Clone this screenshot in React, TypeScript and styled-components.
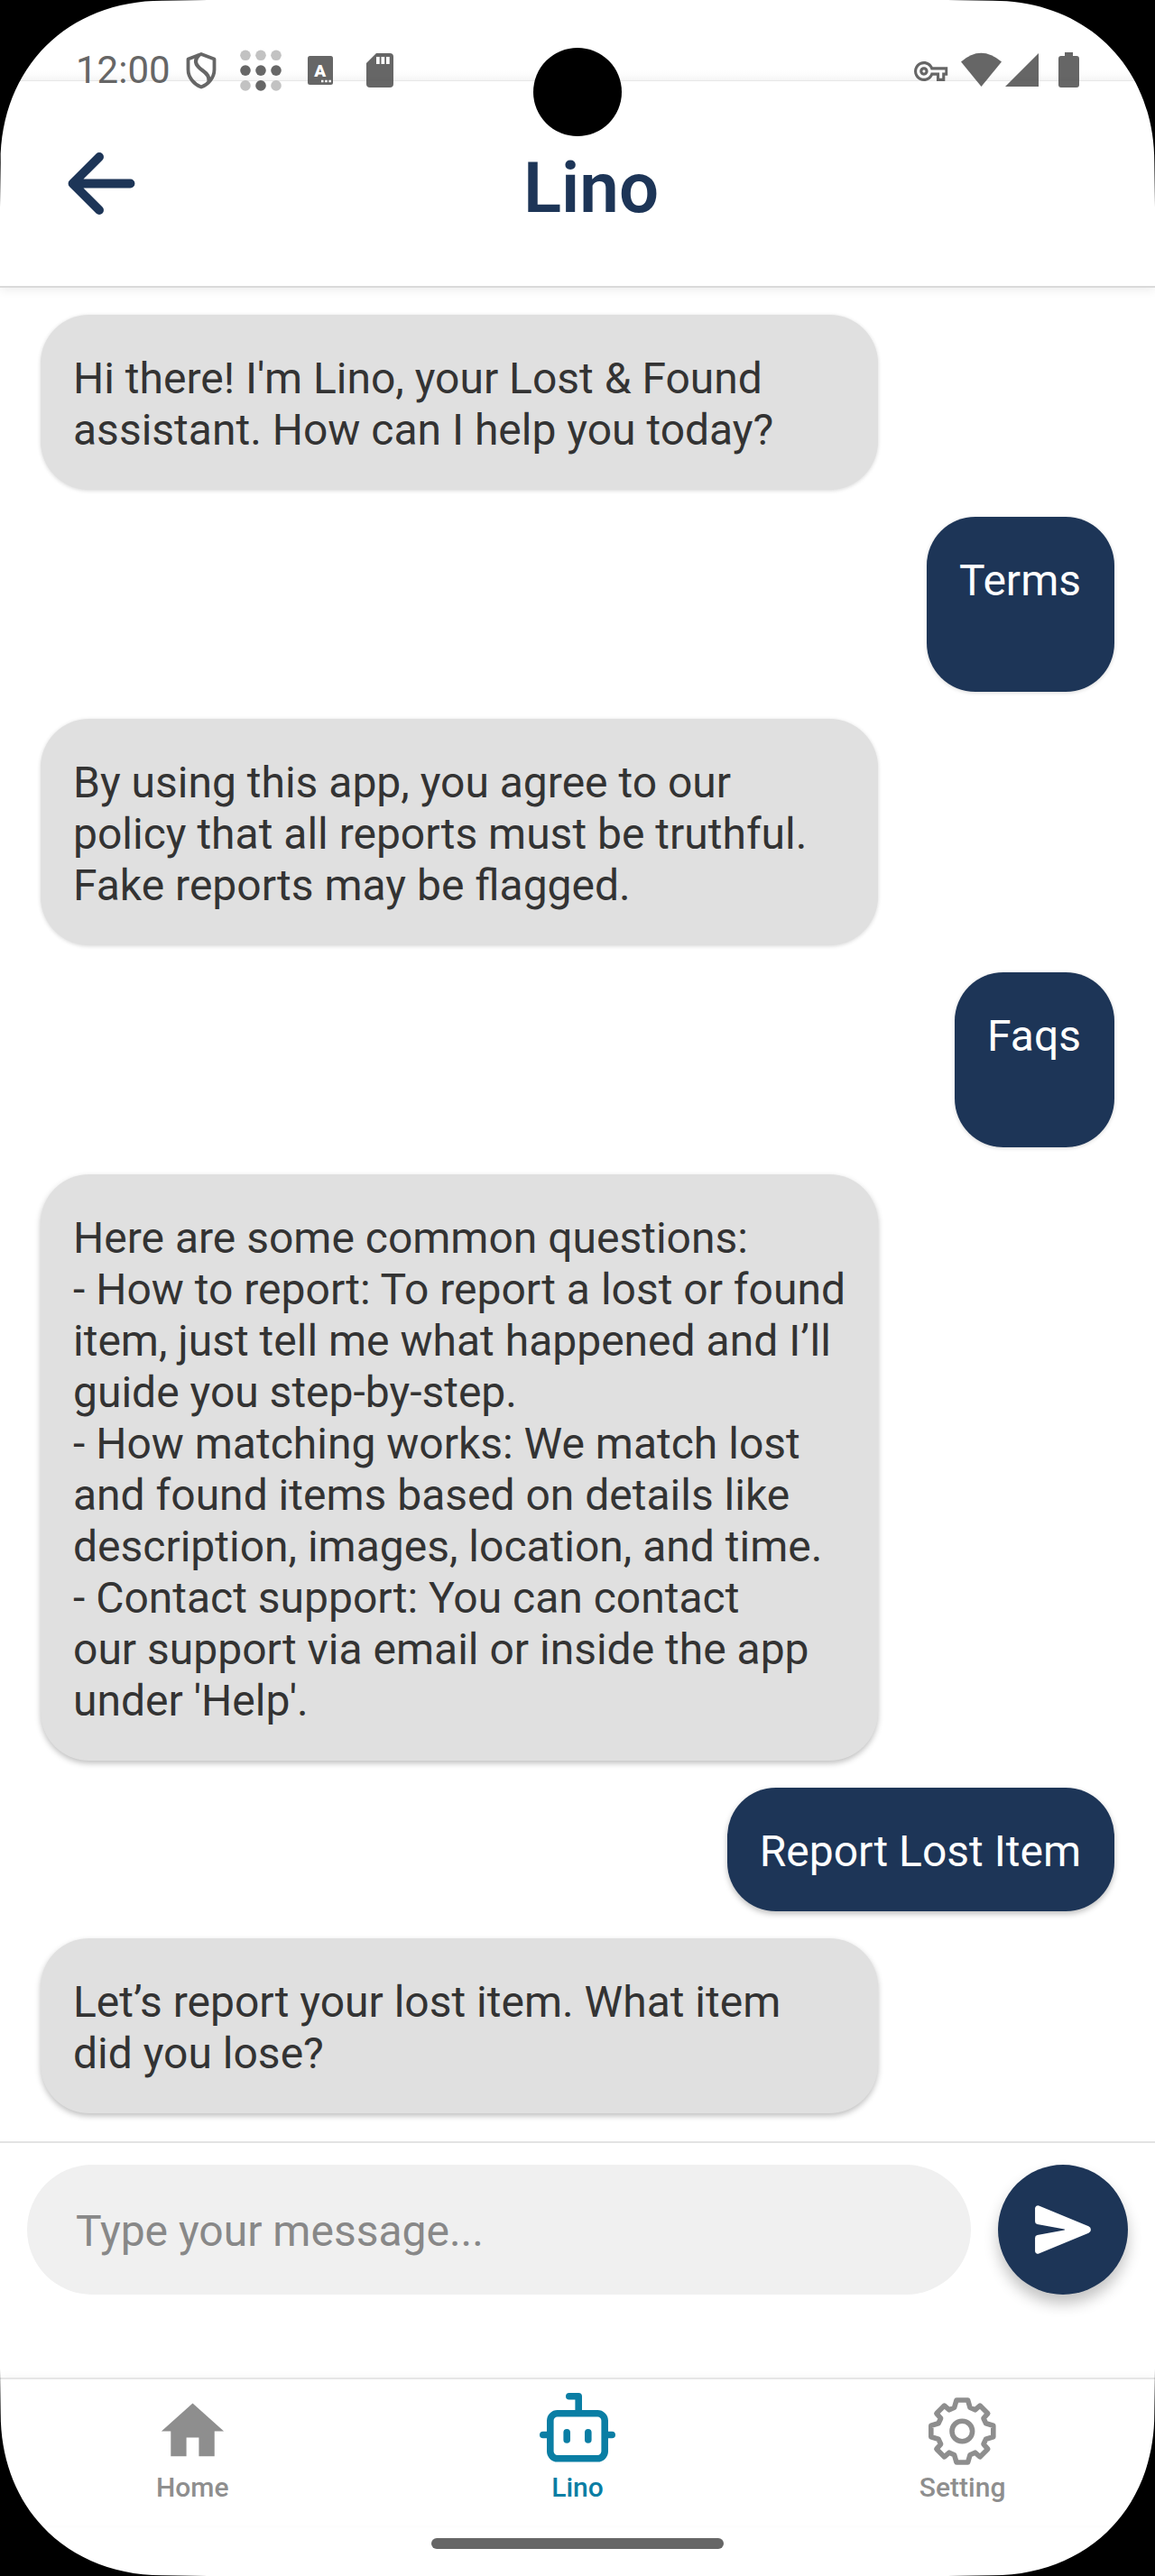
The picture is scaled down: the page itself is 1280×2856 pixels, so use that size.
import React from "react";
import styled, { createGlobalStyle } from "styled-components";
import { IoSend, IoArrowBack } from "react-icons/io5";
import { MdHome, MdOutlineVpnKey } from "react-icons/md";

const Global = createGlobalStyle`
  * { box-sizing: border-box; }
  body { margin: 0; background: #000; }
`;

const Screen = styled.div`
  position: relative;
  width: 1280px;
  height: 2856px;
  display: flex;
  flex-direction: column;
  overflow: hidden;
  background: #fff;
  font-family: Roboto, "Liberation Sans", sans-serif;
`;

const StatusBar = styled.div`
  height: 90px;
  flex: none;
  padding: 56px 83px 0 84px;
  display: flex;
  justify-content: space-between;
  align-items: flex-start;
  background: linear-gradient(#fff 78px, #f8f8f8 89px, #ebebeb 89px);
  color: #666;
`;

const StatusGroup = styled.div`
  display: flex;
  align-items: flex-start;
`;

const Clock = styled.span`
  font-size: 42px;
  line-height: 44px;
  width: 121px;
`;

const StatusSvg = styled.svg`
  overflow: visible;
  display: block;
`;

const Camera = styled.div`
  position: absolute;
  left: 591px;
  top: 53px;
  width: 98px;
  height: 98px;
  border-radius: 50%;
  background: #000;
`;

const Header = styled.header`
  flex: none;
  height: 229px;
  display: grid;
  grid-template-columns: 200px 1fr 170px;
  align-items: start;
  border-bottom: 2px solid #dadada;
  box-shadow: 0 3px 10px rgba(0, 0, 0, 0.07);
  color: #1d3557;
`;

const BackButton = styled.div`
  padding: 61px 0 0 60px;
`;

const Title = styled.h1`
  margin: 0;
  padding-top: 71px;
  text-align: center;
  font-size: 78px;
  line-height: 96px;
  font-weight: 600;
`;

const Messages = styled.main`
  flex: none;
  height: 2055px;
  padding: 30px 45px 0;
  display: flex;
  flex-direction: column;
  align-items: flex-start;
  gap: 30px;
`;

const Bubble = styled.div<{ $user?: boolean; $deep?: boolean }>`
  width: ${(p) => (p.$user ? "auto" : "928px")};
  align-self: ${(p) => (p.$user ? "flex-end" : "flex-start")};
  padding: 42px ${(p) => (p.$user ? "37px" : "36px")} 38px 36px;
  border-radius: 54px;
  background: ${(p) => (p.$user ? "#1d3557" : "#e0e0e0")};
  color: ${(p) => (p.$user ? "#fff" : "#333")};
  font-size: 48px;
  line-height: 57px;
  white-space: pre;
  box-shadow: ${(p) => (p.$deep ? "0 3px 6px rgba(0,0,0,0.25)" : "0 1px 4px rgba(0,0,0,0.16)")};
`;

const Composer = styled.div`
  flex: none;
  height: 262px;
  padding: 24px 30px 0;
  display: flex;
  gap: 30px;
  align-items: flex-start;
  border-top: 2px solid #e3e3e3;
`;

const Field = styled.div`
  flex: 1;
  height: 144px;
  padding: 3px 54px 0;
  display: flex;
  align-items: center;
  border-radius: 72px;
  background: #f0f0f0;
  color: #888;
  font-size: 48px;
`;

const SendButton = styled.div`
  width: 144px;
  height: 144px;
  display: flex;
  align-items: center;
  justify-content: center;
  border-radius: 50%;
  background: #1d3557;
  color: #fff;
  box-shadow: 0 10px 16px rgba(0, 0, 0, 0.24);
`;

const Nav = styled.nav`
  flex: none;
  height: 164px;
  display: grid;
  grid-template-columns: repeat(3, 1fr);
  border-top: 2px solid #e6e6e6;
  box-shadow: 0 -2px 8px rgba(0, 0, 0, 0.03);
`;

const Tab = styled.div<{ $active?: boolean }>`
  display: flex;
  flex-direction: column;
  align-items: center;
  color: ${(p) => (p.$active ? "#0a7ea4" : "#8e8e8e")};
`;

const TabIcon = styled.div`
  height: 102px;
  padding-top: 16px;
  display: flex;
`;

const TabLabel = styled.span`
  font-size: 30px;
  line-height: 36px;
  font-weight: 500;
`;

const HomeIndicator = styled.div`
  flex: none;
  width: 324px;
  height: 12px;
  margin: 14px auto 0;
  border-radius: 6px;
  background: #666;
`;

const Corners = styled.svg`
  position: absolute;
  inset: 0;
  pointer-events: none;
`;

const CORNER = "M0 0H230L180 0.700C75 0.700 0.700 75 0.700 180L0 230Z";

const messages: { user?: boolean; deep?: boolean; text: string }[] = [
  { text: "Hi there! I'm Lino, your Lost & Found\nassistant. How can I help you today?" },
  { user: true, text: "Terms\n " },
  {
    text: "By using this app, you agree to our\npolicy that all reports must be truthful.\nFake reports may be flagged.",
  },
  { user: true, text: "Faqs\n " },
  {
    deep: true,
    text: "Here are some common questions:\n- How to report: To report a lost or found\nitem, just tell me what happened and I’ll\nguide you step-by-step.\n- How matching works: We match lost\nand found items based on details like\ndescription, images, location, and time.\n- Contact support: You can contact\nour support via email or inside the app\nunder 'Help'.",
  },
  { user: true, deep: true, text: "Report Lost Item" },
  { deep: true, text: "Let’s report your lost item. What item\ndid you lose?" },
];

// One quadrant of the gear outline, turned four times round the centre.
const gearQuadrant = [
  [6.3, -34.5],
  [8.7, -26.3],
  [14.3, -23.7],
  [19.7, -28.4],
  [28.4, -19.7],
  [23.7, -14.3],
  [26.3, -8.7],
  [34.5, -6.3],
];

const gearPath = (() => {
  const pts: string[] = [];
  let quadrant = gearQuadrant;
  for (let i = 0; i < 4; i++) {
    quadrant.forEach(([x, y]) => pts.push(`${x} ${y}`));
    quadrant = quadrant.map(([x, y]) => [-y, x]);
  }
  return "M" + pts.join("L") + "Z";
})();

export default function App() {
  return (
    <>
      <Global />
      <Screen>
        <StatusBar>
          <StatusGroup>
            <Clock>12:00</Clock>
            <StatusSvg width="240" height="48" viewBox="205 56 240 48">
              <path
                d="M223 60L237.500 65.500V77C237.500 86 231 93.500 223 96.500C215 93.500 208.500 86 208.500 77V65.500Z"
                fill="none"
                stroke="#666"
                strokeWidth="3.800"
                strokeLinejoin="round"
              />
              <path d="M220.500 61C213 69 219 74 225 78.500C230 82 232 86 231.500 90" fill="none" stroke="#666" strokeWidth="4.200" />
              {[0, 1, 2].map((r) =>
                [0, 1, 2].map((c) => (
                  <circle
                    key={`${r}${c}`}
                    cx={272 + c * 17}
                    cy={61.3 + r * 16.8}
                    r="5.800"
                    fill={r === 1 || (r === 2 && c === 1) ? "#666" : "#c2c2c2"}
                  />
                ))
              )}
              <rect x="341" y="62" width="28" height="32" rx="2.500" fill="#666" />
              <text x="354.800" y="84.500" fontSize="19" fontWeight="900" textAnchor="middle" fill="#fff">
                A
              </text>
              <path d="M356 88.700h2.500v2.500h-2.500zM360.200 88.700h2.500v2.500h-2.500zM364.400 88.700h2.500v2.500h-2.500z" fill="#fff" />
              <path d="M417 59H432Q436 59 436 63V93Q436 97 432 97H410Q406 97 406 93V70Z" fill="#666" />
              <path d="M417 63h3.700v8h-3.700zM422.500 63h3.700v8h-3.700zM428 63h3.700v8h-3.700z" fill="#fff" />
            </StatusSvg>
          </StatusGroup>
          <StatusGroup>
            <StatusSvg width="184" height="48" viewBox="1013 56 184 48">
              <g transform="translate(1013 60.300) scale(1.560)">
                <MdOutlineVpnKey size={24} color="#666" />
              </g>
              <path d="M1065 68.500Q1087 49 1110 68.500L1087.500 96Z" fill="#666" />
              <path d="M1114 96L1151 59V96Z" fill="#666" />
              <path d="M1180 58H1189V62H1193Q1196 62 1196 65V94Q1196 97 1193 97H1176Q1173 97 1173 94V65Q1173 62 1176 62H1180Z" fill="#666" />
            </StatusSvg>
          </StatusGroup>
        </StatusBar>
        <Camera />
        <Header>
          <BackButton>
            <IoArrowBack size={105} />
          </BackButton>
          <Title>Lino</Title>
        </Header>
        <Messages>
          {messages.map((m, i) => (
            <Bubble key={i} $user={m.user} $deep={m.deep}>
              {m.text}
            </Bubble>
          ))}
        </Messages>
        <Composer>
          <Field>Type your message...</Field>
          <SendButton>
            <IoSend size={66} />
          </SendButton>
        </Composer>
        <Nav>
          <Tab>
            <TabIcon>
              <MdHome size={83} />
            </TabIcon>
            <TabLabel>Home</TabLabel>
          </Tab>
          <Tab $active>
            <TabIcon>
              <svg width="90" height="90" viewBox="595 2654 90 90" overflow="visible" fill="none" stroke="currentColor" strokeWidth="7.600" strokeLinecap="round" strokeLinejoin="round">
                <rect x="609.800" y="2675.800" width="60.400" height="50" rx="8" />
                <path d="M630.800 2656.800H641.200V2675M601.800 2699.500H608M672 2699.500H678.200M628.200 2696.800V2705M651.800 2696.800V2705" />
              </svg>
            </TabIcon>
            <TabLabel>Lino</TabLabel>
          </Tab>
          <Tab>
            <TabIcon>
              <svg width="84" height="84" viewBox="-41.300 -41.500 84 84" fill="none" stroke="currentColor" strokeWidth="5.600">
                <path d={gearPath} strokeLinejoin="round" />
                <circle r="11.300" />
              </svg>
            </TabIcon>
            <TabLabel>Setting</TabLabel>
          </Tab>
        </Nav>
        <HomeIndicator />
        <Corners width="1280" height="2856">
          <path d={CORNER} />
          <path d={CORNER} transform="translate(1280 0) scale(-1 1)" />
          <path d={CORNER} transform="translate(0 2856) scale(1 -1)" />
          <path d={CORNER} transform="translate(1280 2856) scale(-1 -1)" />
        </Corners>
      </Screen>
    </>
  );
}
